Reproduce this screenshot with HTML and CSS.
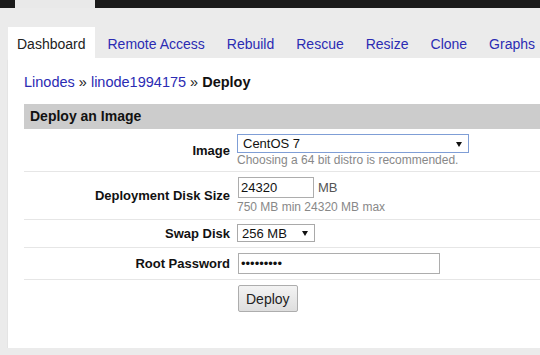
FILE: index.html
```html
<!DOCTYPE html>
<html lang="en">
<head>
  <meta charset="UTF-8">
  <title>Deploy | Linode Manager</title>
  <link rel="stylesheet" href="styles.css">
</head>
<body>
  <div class="topbar">
    <div class="topbar-active"></div>
  </div>

  <div class="tabs">
    <a class="tab active">Dashboard</a>
    <a class="tab">Remote Access</a>
    <a class="tab">Rebuild</a>
    <a class="tab">Rescue</a>
    <a class="tab">Resize</a>
    <a class="tab">Clone</a>
    <a class="tab">Graphs</a>
  </div>

  <div class="panel">
    <div class="crumbs">
      <a>Linodes</a> &raquo; <a>linode1994175</a> &raquo; <strong>Deploy</strong>
    </div>

    <div class="section-head">Deploy an Image</div>

    <form class="deploy-form">
      <div class="row row-image">
        <label class="row-label">Image</label>
        <div class="row-field">
          <div class="select-wrap select-wide focused">
            <select>
              <option>CentOS 7</option>
            </select>
            <span class="arrow"></span>
          </div>
          <div class="hint">Choosing a 64 bit distro is recommended.</div>
        </div>
      </div>

      <div class="row row-disk">
        <label class="row-label">Deployment Disk Size</label>
        <div class="row-field">
          <div class="inline">
            <input class="text-input size-input" type="text" value="24320">
            <span class="unit">MB</span>
          </div>
          <div class="hint">750 MB min 24320 MB max</div>
        </div>
      </div>

      <div class="row row-swap">
        <label class="row-label">Swap Disk</label>
        <div class="row-field">
          <div class="select-wrap select-small">
            <select>
              <option>256 MB</option>
            </select>
            <span class="arrow"></span>
          </div>
        </div>
      </div>

      <div class="row">
        <label class="row-label">Root Password</label>
        <div class="row-field">
          <input class="text-input pass-input" type="password" value="123456789">
        </div>
      </div>

      <div class="row row-last">
        <div></div>
        <div class="row-field">
          <button type="button" class="btn">Deploy</button>
        </div>
      </div>
    </form>
  </div>
</body>
</html>
```

FILE: styles.css
```css
body {
  margin: 0;
  background: #ebebeb;
  font-family: "Liberation Sans", Arial, sans-serif;
  color: #111;
  overflow: hidden;
}
a {
  color: #2b2bb3;
  text-decoration: none;
  cursor: pointer;
}
.topbar {
  height: 8px;
  background: #1b1b1b;
  display: flex;
}
.topbar-active {
  margin-left: 15px;
  width: 80px;
  background: #e9e9e9;
}
.tabs {
  display: flex;
  margin-top: 19px;
  padding-left: 8px;
  height: 31px;
  overflow: hidden;
  white-space: nowrap;
}
.tab {
  padding: 3px 9px 0;
  margin-right: 4px;
  line-height: 28px;
  font-size: 14px;
}
.tab.active {
  background: #fff;
  color: #222;
}
.panel {
  margin-left: 8px;
  height: 290px;
  padding-left: 16px;
  background: #fff;
  box-shadow: 0 2px 1px rgba(0,0,0,0.18);
}
.crumbs {
  padding-top: 14px;
  line-height: 20px;
  font-size: 14.5px;
  color: #222;
}
.crumbs strong {
  color: #111;
}
.section-head {
  margin-top: 12px;
  height: 25px;
  line-height: 25px;
  padding-left: 6px;
  background: #cccccc;
  font-size: 14px;
  font-weight: bold;
  color: #111;
}
.row {
  display: grid;
  grid-template-columns: 213px 1fr;
  padding: 5px 0;
  border-bottom: 1px solid #e6e6e6;
}
.row-image {
  padding-bottom: 4px;
}
.row-swap {
  padding: 4px 0 5px;
}
.row-last {
  border-bottom: none;
}
.row-label {
  align-self: center;
  text-align: right;
  padding-right: 7px;
  font-size: 13px;
  font-weight: bold;
  color: #111;
}
.row-field {
  display: flex;
  flex-direction: column;
  align-items: flex-start;
}
.hint {
  font-size: 12px;
  line-height: 14px;
  color: #888;
}
.row-disk .hint {
  margin-top: 2px;
}
.inline {
  display: flex;
  align-items: center;
}
.unit {
  margin-left: 4px;
  font-size: 13px;
  color: #555;
}
.select-wrap {
  position: relative;
}
.select-wrap select {
  appearance: none;
  -webkit-appearance: none;
  display: block;
  margin: 0;
  box-sizing: border-box;
  border: 1px solid #a9a9a9;
  border-radius: 0;
  background: #fff;
  font-family: inherit;
  font-size: 13px;
  color: #111;
  padding: 0 0 0 5px;
}
.select-wide select {
  width: 232px;
  height: 19px;
}
.select-wide.focused select {
  border-color: #7f9ed6;
}
.select-small select {
  width: 78px;
  height: 18px;
  padding-left: 4px;
}
.arrow {
  position: absolute;
  right: 7px;
  top: 50%;
  margin-top: -2px;
  width: 0;
  height: 0;
  border-left: 3px solid transparent;
  border-right: 3px solid transparent;
  border-top: 5px solid #111;
  pointer-events: none;
}
.text-input {
  box-sizing: border-box;
  height: 21px;
  margin: 0 0 0 1px;
  border: 1px solid #adadad;
  padding: 0 2px;
  font-family: inherit;
  font-size: 13px;
  color: #111;
}
.size-input {
  width: 76px;
}
.pass-input {
  width: 202px;
}
.btn {
  margin: 0 0 0 1px;
  height: 27px;
  padding: 0 7px;
  border: 1px solid #adadad;
  border-radius: 2px;
  background: linear-gradient(#f3f3f3, #dedede);
  font-family: inherit;
  font-size: 14px;
  color: #222;
}
```
